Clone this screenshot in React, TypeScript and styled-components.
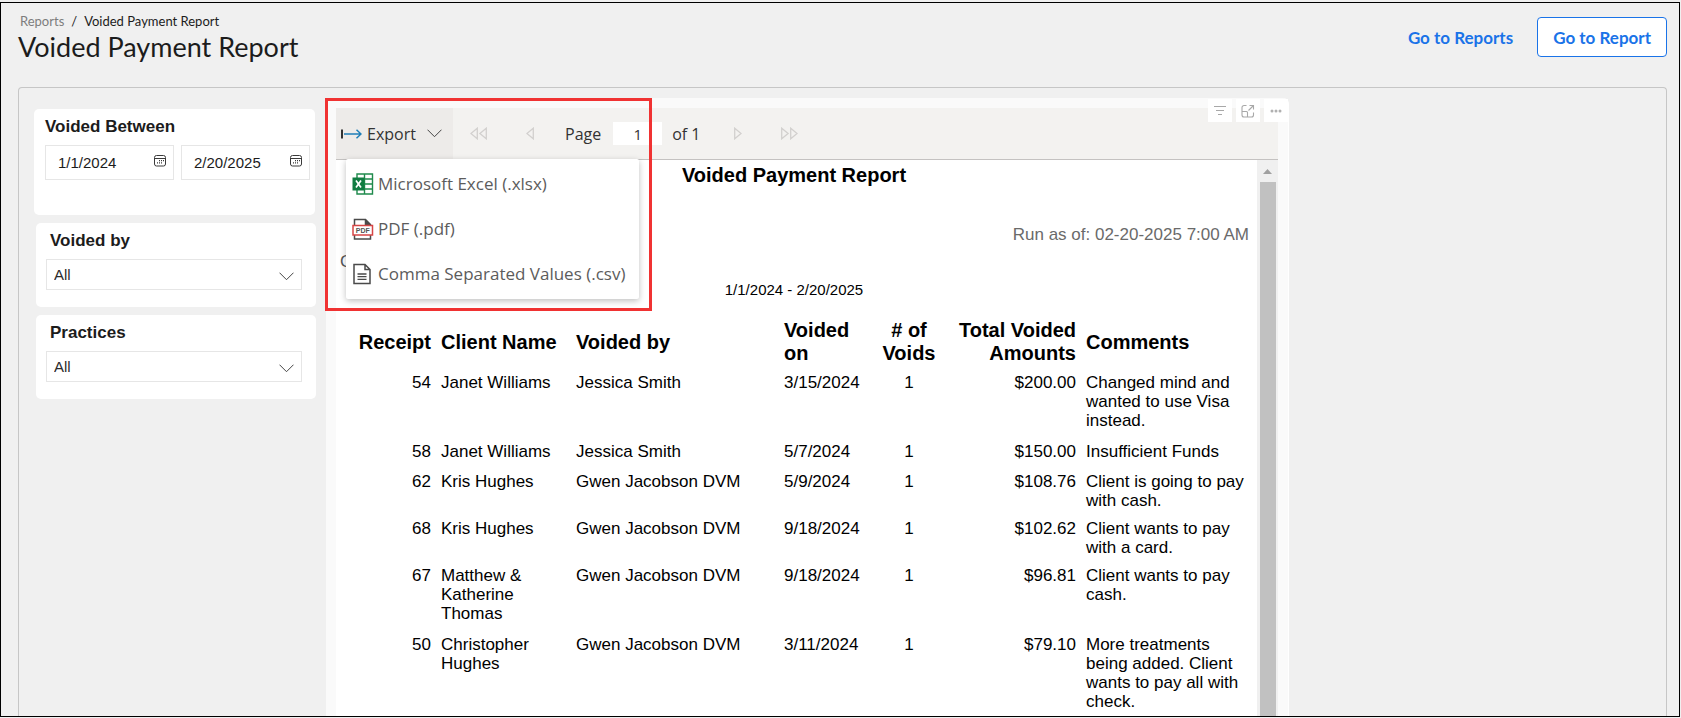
import React, { useState } from "react";
import styled, { createGlobalStyle } from "styled-components";

const arial = `"Liberation Sans", Arial, sans-serif`;
const brand = `Lato, "Open Sans", sans-serif`;
const toolbarFont = `"Open Sans", "Noto Sans", sans-serif`;

const GlobalStyle = createGlobalStyle`
  *, *::before, *::after { box-sizing: border-box; }
  body { margin: 0; background: #f0f0f0; font-family: ${arial}; color: #000; }
  button, input, select { font: inherit; color: inherit; margin: 0; }
  h1, h2, p { margin: 0; font-weight: 400; }
`;

const Page = styled.div`
  display: flex;
  height: 100vh;
  padding: 2px 1px 1px 0;
`;

const Frame = styled.div`
  display: flex;
  flex-direction: column;
  flex: 1;
  min-width: 0;
  overflow: hidden;
  border: 1px solid #000;
`;

const Header = styled.header`
  display: flex;
  justify-content: space-between;
  align-items: flex-start;
  padding: 10px 12px 0 17px;
  height: 84px;
  flex: none;
  font-family: ${brand};
`;

const Breadcrumb = styled.nav`
  display: flex;
  gap: 7px;
  padding-left: 2px;
  font-size: 13px;
  line-height: 16px;
  color: #1c1c1c;
`;

const Crumb = styled.a`
  color: #7d7d7d;
  text-decoration: none;
`;

const Title = styled.h1`
  font-size: 27px;
  line-height: 36px;
  color: #1c1c1c;
`;

const Actions = styled.div`
  display: flex;
  align-items: center;
  gap: 24px;
  padding-top: 4px;
  font-size: 17px;
  font-weight: 700;
`;

const ActionLink = styled.a`
  color: #1a73e8;
  text-decoration: none;
`;

const ActionButton = styled.button`
  height: 40px;
  padding: 0 15px;
  border: 1px solid #1a73e8;
  border-radius: 4px;
  background: #fff;
  color: #1a73e8;
`;

const Canvas = styled.main`
  display: flex;
  flex: 1;
  min-height: 0;
  gap: 10px;
  margin: 0 12px 0 17px;
  padding: 10px 15px 0;
  border: 1px solid #c6c6c6;
  border-bottom: 0;
  border-radius: 4px 4px 0 0;
`;

const Filters = styled.aside`
  display: flex;
  flex-direction: column;
  flex: 0 0 282px;
  min-width: 0;
  gap: 8px;
  padding-top: 11px;
`;

const Card = styled.section<{ $inset?: boolean }>`
  display: flex;
  flex-direction: column;
  height: ${(p) => (p.$inset ? 84 : 106)}px;
  margin: ${(p) => (p.$inset ? "0 0 0 2px" : "0 1px 0 0")};
  padding: ${(p) => (p.$inset ? "8px 14px 0 10px" : "8px 5px 0 11px")};
  border-radius: 5px;
  background: #fff;
`;

const FilterLabel = styled.label<{ $indent?: boolean }>`
  padding-left: ${(p) => (p.$indent ? 4 : 0)}px;
  font-size: 17px;
  font-weight: 700;
  line-height: 20px;
  color: #1c1c1c;
`;

const DateRow = styled.div`
  display: flex;
  gap: 7px;
  margin-top: 8px;
`;

const DateField = styled.div`
  display: flex;
  flex: 1;
  min-width: 0;
  height: 35px;
  padding: 0 7px 0 12px;
  border: 1px solid #e6e6e6;
`;

const DateInput = styled.input`
  flex: 1;
  min-width: 0;
  padding: 0;
  border: 0;
  background: none;
  font-size: 15px;
  color: #1c1c1c;
`;

const CalendarButton = styled.button`
  display: flex;
  padding: 9px 0 0;
  border: 0;
  background: none;
`;

const SelectField = styled.div`
  display: grid;
  align-items: center;
  margin-top: 8px;
  > * { grid-area: 1 / 1; }
  > svg { justify-self: end; margin: 4px 8px 0 0; pointer-events: none; }
`;

const Select = styled.select`
  appearance: none;
  width: 100%;
  height: 31px;
  padding: 0 30px 0 7px;
  border: 1px solid #e6e6e6;
  border-radius: 0;
  background: #fff;
  font-size: 15px;
  color: #2b2b2b;
`;

const Visual = styled.section`
  position: relative;
  display: flex;
  flex-direction: column;
  flex: 0 1 963px;
  min-width: 0;
  padding: 10px 10px 0;
  border-right: 1px solid #fff;
  border-radius: 6px 6px 0 0;
  background: #fafafa;
`;

const VisualActions = styled.div`
  position: absolute;
  top: 1px;
  right: 0;
  display: flex;
  gap: 4px;
`;

const VisualAction = styled.button`
  display: grid;
  place-items: center;
  width: 24px;
  height: 23px;
  padding: 0;
  border: 0;
  background: #fff;
`;

const Toolbar = styled.div`
  display: flex;
  align-items: center;
  flex: none;
  height: 52px;
  border-bottom: 1px solid #c4c2c1;
  background: #f3f2f0;
  font-family: ${toolbarFont};
  font-size: 16px;
  color: #333;
`;

const ExportButton = styled.button`
  display: flex;
  align-items: center;
  align-self: stretch;
  gap: 5px;
  width: 117px;
  padding: 0 0 0 5px;
  border: 0;
  background: #edebe9;
  > svg:last-child { margin-left: 6px; }
`;

const PageButton = styled.button<{ $width: number }>`
  display: grid;
  place-items: center;
  align-self: stretch;
  width: ${(p) => p.$width}px;
  padding: 0;
  border: 0;
  background: none;
`;

const PageLabel = styled.label`
  display: flex;
  align-items: center;
  gap: 12px;
  padding-left: 8px;
`;

const PageInput = styled.input`
  width: 49px;
  height: 23px;
  padding: 0 20px 0 0;
  border: 0;
  background: #fff;
  font-size: 15px;
  text-align: right;
`;

const PageCount = styled.span`
  padding: 0 10px;
`;

const Highlight = styled.div`
  position: absolute;
  top: 0;
  left: -1px;
  width: 327px;
  height: 213px;
  border: 3px solid #f03232;
  pointer-events: none;
`;

const Menu = styled.ul`
  position: absolute;
  top: 61px;
  left: 20px;
  width: 293px;
  margin: 0;
  padding: 2px 0 3px;
  list-style: none;
  border-radius: 2px;
  background: #fff;
  box-shadow: 0 2px 6px rgba(0, 0, 0, 0.25);
`;

const MenuItem = styled.button`
  display: flex;
  align-items: center;
  gap: 4px;
  width: 100%;
  height: 45px;
  padding: 0 6px;
  border: 0;
  background: none;
  font-family: ${toolbarFont};
  font-size: 17px;
  color: #5c5c5c;
  white-space: nowrap;
`;

const ReportBody = styled.div`
  display: flex;
  flex: 1;
  min-height: 0;
  background: #fff;
`;

const Sheet = styled.article`
  flex: 1;
  min-width: 0;
  overflow: hidden;
`;

const ReportTitle = styled.h2`
  padding: 3px 5px 0 0;
  font-size: 20px;
  font-weight: 700;
  line-height: 24px;
  text-align: center;
`;

const RunDate = styled.p`
  padding: 38px 8px 0 0;
  font-size: 17px;
  line-height: 19px;
  text-align: right;
  color: #6a6a6a;
`;

const ReportNote = styled.p`
  padding-left: 4px;
  font-size: 17px;
  line-height: 36px;
  color: #555;
`;

const ReportRange = styled.p`
  padding: 0 5px 0 0;
  font-size: 15px;
  line-height: 20px;
  text-align: center;
`;

const Table = styled.table`
  width: calc(100% - 18px);
  margin: 19px 0 0 15px;
  border-collapse: collapse;
  table-layout: fixed;
`;

type Align = "left" | "center" | "right";

const HeadCell = styled.th<{ $align: Align }>`
  padding: 0 5px;
  font-size: 20px;
  line-height: 23px;
  text-align: ${(p) => p.$align};
`;

const Cell = styled.td<{ $align: Align }>`
  padding: 8px 5px 0;
  vertical-align: top;
  font-size: 17px;
  line-height: 19px;
  text-align: ${(p) => p.$align};
`;

const Row = styled.tr<{ $height: number }>`
  height: ${(p) => p.$height}px;
`;

const ScrollBar = styled.div`
  display: flex;
  flex-direction: column;
  align-items: center;
  flex: 0 0 21px;
  background: #f0f0f0;
`;

const ScrollUp = styled.button`
  display: grid;
  place-items: center;
  width: 100%;
  height: 22px;
  padding: 0;
  border: 0;
  background: none;
`;

const ScrollThumb = styled.div`
  flex: 1;
  width: 16px;
  background: #c1c1c1;
`;

const CalendarIcon = () => (
  <svg width="12" height="12" viewBox="0 0 12 12" fill="none" stroke="#3a3a3a" aria-hidden="true">
    <rect x="0.5" y="0.5" width="11" height="10.5" rx="2" />
    <path d="M0.5 3.5h11" />
    <path d="M5 5.7h1M7 5.7h1M9 5.7h1M3 7.9h1M5 7.9h1M7 7.9h1" strokeWidth="1.2" />
  </svg>
);

const Chevron = () => (
  <svg width="15" height="9" viewBox="0 0 15 9" fill="none" stroke="#444" aria-hidden="true">
    <path d="M0.5 0.7L7.5 7.7L14.5 0.7" />
  </svg>
);

const ExportIcon = () => (
  <svg width="21" height="12" viewBox="0 0 21 12" fill="none" aria-hidden="true">
    <path d="M1 1.5v9" stroke="#333" strokeWidth="2" />
    <path d="M3 6h17M15.5 1.8L20 6l-4.5 4.2" stroke="#1f7fb8" strokeWidth="1.5" />
  </svg>
);

const PageArrow = ({ double, next }: { double?: boolean; next?: boolean }) => {
  const width = double ? 17 : 8;
  return (
    <svg width={width} height="13" viewBox={`0 0 ${width} 13`} fill="none" stroke="#d2d0ce" strokeWidth="1.3" aria-hidden="true">
      <g transform={next ? `translate(${width} 0) scale(-1 1)` : undefined}>
        <path d="M7.3 1.2v10.6L0.9 6.5z" />
        {double && <path d="M16.3 1.2v10.6L9.9 6.5z" />}
      </g>
    </svg>
  );
};

const FilterIcon = () => (
  <svg width="14" height="12" viewBox="0 0 14 12" stroke="#a8a8a8" strokeWidth="1.1" aria-hidden="true">
    <path d="M1 1.5h12M3 5.5h8M5 9.5h4" />
  </svg>
);

const FocusIcon = () => (
  <svg width="14" height="14" viewBox="0 0 14 14" fill="none" stroke="#a8a8a8" strokeWidth="1.1" aria-hidden="true">
    <path d="M5.5 1.5H3a2 2 0 0 0-2 2V11a2 2 0 0 0 2 2h7.5a2 2 0 0 0 2-2V8.5" />
    <path d="M1 7.5h4.5a1 1 0 0 1 1 1V13" />
    <path d="M7.5 6.5L12.5 1.5M8.5 1.5h4v4" />
  </svg>
);

const MoreIcon = () => (
  <svg width="12" height="4" viewBox="0 0 12 4" fill="#b0b0b0" aria-hidden="true">
    <circle cx="2" cy="2" r="1.5" />
    <circle cx="6" cy="2" r="1.5" />
    <circle cx="10" cy="2" r="1.5" />
  </svg>
);

const ExcelIcon = () => (
  <svg width="22" height="22" viewBox="0 0 22 22" fill="none" aria-hidden="true">
    <path d="M5 1h15.5v20H5zM5 6h15.5M5 11h15.5M5 16h15.5M12.5 1v20" stroke="#1f8a4c" strokeWidth="1.4" />
    <rect x="0.5" y="4.5" width="12" height="13" fill="#107c41" />
    <path d="M4 7.5l5 7M9 7.5l-5 7" stroke="#fff" strokeWidth="1.7" />
  </svg>
);

const PdfIcon = () => (
  <svg width="22" height="22" viewBox="0 0 22 22" fill="none" aria-hidden="true">
    <path d="M2.5 7V1.5h11l5 5V7M13.5 1.5v5h5M2.5 17v4h16v-4" stroke="#4a4a4a" strokeWidth="1.5" />
    <path d="M13.5 1.5l5 5h-5z" fill="#4a4a4a" />
    <rect x="1" y="7.5" width="19.5" height="9.5" fill="#fff" stroke="#d64545" strokeWidth="1.5" />
    <text x="10.75" y="14.5" fontFamily="Liberation Sans, Arial, sans-serif" fontSize="7" fontWeight="700" textAnchor="middle" fill="#555">PDF</text>
  </svg>
);

const CsvIcon = () => (
  <svg width="22" height="22" viewBox="0 0 22 22" fill="none" stroke="#4a4a4a" strokeWidth="1.5" aria-hidden="true">
    <path d="M2 1.5h11l5 5v14H2zM13 1.5v5h5" />
    <path d="M5.5 11h9M5.5 13.7h9M5.5 16.4h9" strokeWidth="1.3" />
  </svg>
);

interface Column {
  title: string;
  width?: number;
  align: Align;
}

const columns: Column[] = [
  { title: "Receipt", width: 85, align: "right" },
  { title: "Client Name", width: 135, align: "left" },
  { title: "Voided by", width: 208, align: "left" },
  { title: "Voided on", width: 92, align: "left" },
  { title: "# of Voids", width: 76, align: "center" },
  { title: "Total Voided Amounts", width: 134, align: "right" },
  { title: "Comments", align: "left" },
];

const rows: { height: number; cells: string[] }[] = [
  { height: 69, cells: ["54", "Janet Williams", "Jessica Smith", "3/15/2024", "1", "$200.00", "Changed mind and wanted to use Visa instead."] },
  { height: 30, cells: ["58", "Janet Williams", "Jessica Smith", "5/7/2024", "1", "$150.00", "Insufficient Funds"] },
  { height: 47, cells: ["62", "Kris Hughes", "Gwen Jacobson DVM", "5/9/2024", "1", "$108.76", "Client is going to pay with cash."] },
  { height: 47, cells: ["68", "Kris Hughes", "Gwen Jacobson DVM", "9/18/2024", "1", "$102.62", "Client wants to pay with a card."] },
  { height: 69, cells: ["67", "Matthew & Katherine Thomas", "Gwen Jacobson DVM", "9/18/2024", "1", "$96.81", "Client wants to pay cash."] },
  { height: 88, cells: ["50", "Christopher Hughes", "Gwen Jacobson DVM", "3/11/2024", "1", "$79.10", "More treatments being added. Client wants to pay all with check."] },
];

const exportFormats = [
  { label: "Microsoft Excel (.xlsx)", Icon: ExcelIcon },
  { label: "PDF (.pdf)", Icon: PdfIcon },
  { label: "Comma Separated Values (.csv)", Icon: CsvIcon },
];

const SelectFilter = ({ id, label }: { id: string; label: string }) => (
  <Card $inset>
    <FilterLabel htmlFor={id} $indent>{label}</FilterLabel>
    <SelectField>
      <Select id={id} defaultValue="All">
        <option>All</option>
      </Select>
      <Chevron />
    </SelectField>
  </Card>
);

export default function App() {
  const [menuOpen, setMenuOpen] = useState(true);

  return (
    <Page>
      <GlobalStyle />
      <Frame>
        <Header>
          <div>
            <Breadcrumb aria-label="Breadcrumb">
              <Crumb href="#reports">Reports</Crumb>
              <span>/</span>
              <span>Voided Payment Report</span>
            </Breadcrumb>
            <Title>Voided Payment Report</Title>
          </div>
          <Actions>
            <ActionLink href="#reports">Go to Reports</ActionLink>
            <ActionButton type="button">Go to Report</ActionButton>
          </Actions>
        </Header>

        <Canvas>
          <Filters>
            <Card>
              <FilterLabel htmlFor="date-from">Voided Between</FilterLabel>
              <DateRow>
                <DateField>
                  <DateInput id="date-from" defaultValue="1/1/2024" />
                  <CalendarButton type="button" aria-label="Pick start date"><CalendarIcon /></CalendarButton>
                </DateField>
                <DateField>
                  <DateInput aria-label="Voided to" defaultValue="2/20/2025" />
                  <CalendarButton type="button" aria-label="Pick end date"><CalendarIcon /></CalendarButton>
                </DateField>
              </DateRow>
            </Card>
            <SelectFilter id="voided-by" label="Voided by" />
            <SelectFilter id="practices" label="Practices" />
          </Filters>

          <Visual>
            <Toolbar>
              <ExportButton type="button" aria-expanded={menuOpen} onClick={() => setMenuOpen(!menuOpen)}>
                <ExportIcon />
                Export
                <Chevron />
              </ExportButton>
              <PageButton $width={50} type="button" aria-label="First page"><PageArrow double /></PageButton>
              <PageButton $width={54} type="button" aria-label="Previous page"><PageArrow /></PageButton>
              <PageLabel>
                Page
                <PageInput defaultValue="1" />
              </PageLabel>
              <PageCount>of 1</PageCount>
              <PageButton $width={54} type="button" aria-label="Next page"><PageArrow next /></PageButton>
              <PageButton $width={50} type="button" aria-label="Last page"><PageArrow double next /></PageButton>
            </Toolbar>

            <ReportBody>
              <Sheet>
                <ReportTitle>Voided Payment Report</ReportTitle>
                <RunDate>Run as of: 02-20-2025 7:00 AM</RunDate>
                <ReportNote>C</ReportNote>
                <ReportRange>1/1/2024 - 2/20/2025</ReportRange>
                <Table>
                  <colgroup>
                    {columns.map((c) => (
                      <col key={c.title} width={c.width} />
                    ))}
                  </colgroup>
                  <thead>
                    <tr>
                      {columns.map((c) => (
                        <HeadCell key={c.title} $align={c.align} scope="col">{c.title}</HeadCell>
                      ))}
                    </tr>
                  </thead>
                  <tbody>
                    {rows.map((r) => (
                      <Row key={r.cells[0]} $height={r.height}>
                        {r.cells.map((text, i) => (
                          <Cell key={columns[i].title} $align={columns[i].align}>{text}</Cell>
                        ))}
                      </Row>
                    ))}
                  </tbody>
                </Table>
              </Sheet>
              <ScrollBar>
                <ScrollUp type="button" aria-label="Scroll up">
                  <svg width="9" height="5" viewBox="0 0 9 5" fill="#a0a0a0" aria-hidden="true"><path d="M0 5L4.5 0L9 5z" /></svg>
                </ScrollUp>
                <ScrollThumb />
              </ScrollBar>
            </ReportBody>

            <VisualActions>
              <VisualAction type="button" aria-label="Filters"><FilterIcon /></VisualAction>
              <VisualAction type="button" aria-label="Focus mode"><FocusIcon /></VisualAction>
              <VisualAction type="button" aria-label="More options"><MoreIcon /></VisualAction>
            </VisualActions>

            {menuOpen && (
              <Menu>
                {exportFormats.map(({ label, Icon }) => (
                  <li key={label}>
                    <MenuItem type="button"><Icon />{label}</MenuItem>
                  </li>
                ))}
              </Menu>
            )}
            <Highlight />
          </Visual>
        </Canvas>
      </Frame>
    </Page>
  );
}
